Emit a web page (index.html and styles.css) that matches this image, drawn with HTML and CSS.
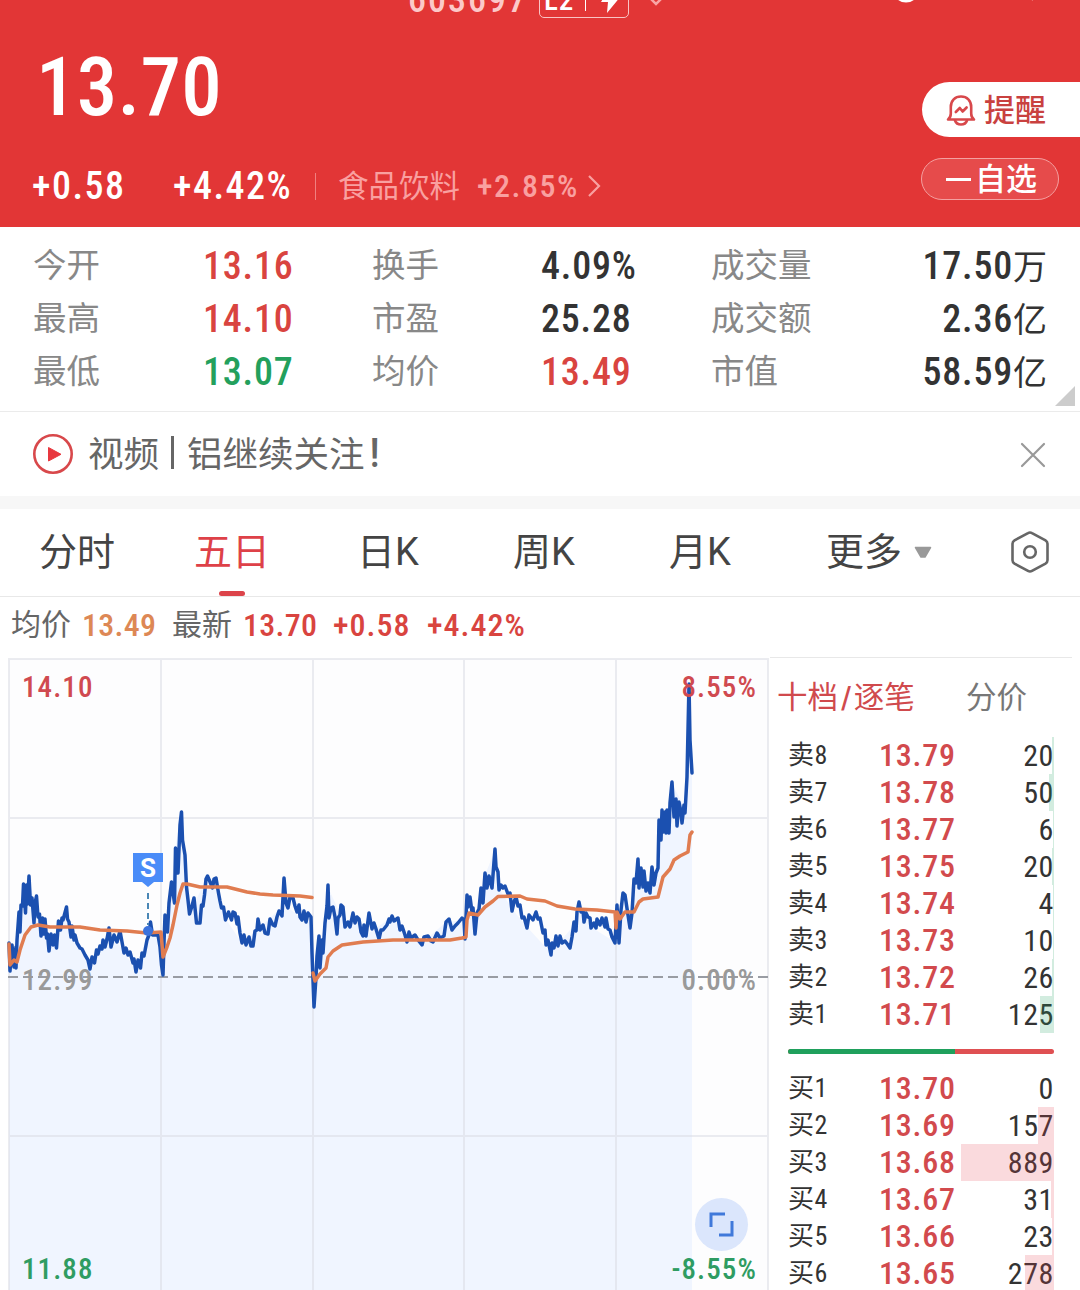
FILE: index.html
```html
<!DOCTYPE html>
<html lang="zh-CN">
<head>
<meta charset="UTF-8" />
<meta name="viewport" content="width=device-width, initial-scale=1" />
<title>603697 五日行情</title>
<link rel="stylesheet" href="styles.css">
</head>
<body>

<header class="quote">
  <div class="title-bar">
    <span class="code">603697</span>
    <span class="level">
      <span>L2</span><i></i>
      <svg width="20" height="26" viewBox="0 0 20 26"><path d="M9 0 0 15h7L6 26 20 9h-7l2-9z" fill="#fff"/></svg>
    </span>
    <svg class="title-arrow" width="16" height="10" viewBox="0 0 16 10"><path d="M2 2l6 6 6-6" fill="none" stroke="#f8a5a5" stroke-width="2.5"/></svg>
    <svg class="search" width="150" height="20" viewBox="0 0 150 20"><circle cx="13" cy="4" r="12" fill="none" stroke="#fff" stroke-width="3"/><path d="M134 8l6 7" stroke="#f8a5a5" stroke-width="2"/></svg>
  </div>
  <div class="price-row">
    <div class="price">13.70</div>
    <button class="remind">
      <svg width="30" height="32" viewBox="0 0 30 32" fill="none" stroke="#d8484b" stroke-width="2.6" stroke-linecap="round" stroke-linejoin="round">
        <path d="M2 25.500c2-1.500 2.800-3 2.800-6v-6.500C4.800 6.500 9 2.500 15 2.500s10.200 4 10.200 10.500v6.500c0 3 .8 4.500 2.800 6z"/>
        <path d="M9 26.500c1 3 3.200 4 6 4s5-1 6-4M9.800 18l4-4 2.800 3.500 4-4"/>
      </svg>
      <span>提醒</span>
    </button>
  </div>
  <div class="change-row">
    <span class="change">+0.58</span>
    <span class="percent">+4.42%</span>
    <span class="sector">食品饮料</span>
    <span class="sector-rate">+2.85%</span>
    <svg width="14" height="22" viewBox="0 0 14 22"><path d="M2 1l10 10-10 10" fill="none" stroke="#f9a0a0" stroke-width="2.2"/></svg>
    <button class="favor"><i></i><span>自选</span></button>
  </div>
</header>

<section class="stats">
  <span>今开</span><b class="up">13.16</b>
  <span>换手</span><b>4.09%</b>
  <span>成交量</span><b class="right">17.50<em>万</em></b>
  <span>最高</span><b class="up">14.10</b>
  <span>市盈</span><b>25.28</b>
  <span>成交额</span><b class="right">2.36<em>亿</em></b>
  <span>最低</span><b class="down">13.07</b>
  <span>均价</span><b class="up">13.49</b>
  <span>市值</span><b class="right">58.59<em>亿</em></b>
</section>

<div class="news">
  <svg width="42" height="42" viewBox="0 0 42 42">
    <circle cx="21" cy="21" r="18.700" fill="none" stroke="#d8484b" stroke-width="2.600"/>
    <path d="M16.500 14.500v13.500l12.500-6.700z" fill="#e8383f" stroke="#e8383f" stroke-linejoin="round"/>
  </svg>
  <span class="news-type">视频</span><i></i><span class="news-text">铝继续关注<em>!</em></span>
  <svg class="close" width="26" height="26" viewBox="0 0 26 26"><path d="M2 2l22 22M24 2L2 24" stroke="#999" stroke-width="2.200" stroke-linecap="round"/></svg>
</div>

<nav class="tabs">
  <a>分时</a>
  <a class="active">五日</a>
  <a>日K</a>
  <a>周K</a>
  <a>月K</a>
  <a class="more">更多<svg width="18" height="13" viewBox="0 0 18 13"><path d="M1.500 1.500h15l-5.500 9.500h-4z" fill="#999" stroke="#999" stroke-width="1.500" stroke-linejoin="round"/></svg></a>
  <svg class="setting" width="40" height="44" viewBox="0 0 40 44" fill="none" stroke="#666" stroke-width="2.600">
    <path d="M18 3.100q2-1.200 4 0L35.500 10.400q2 1.200 2 3.400v16.400q0 2.200-2 3.400L22 40.900q-2 1.200-4 0L4.500 33.600q-2-1.200-2-3.400V13.800q0-2.200 2-3.400z"/>
    <circle cx="20" cy="22" r="5.800"/>
  </svg>
</nav>

<div class="legend">
  <span>均价</span><b class="avg">13.49</b>
  <span class="latest">最新</span><b>13.70</b><b class="diff">+0.58</b><b class="rate">+4.42%</b>
</div>

<main class="main">
  <div class="chart">
    <svg width="770" height="633" viewBox="0 657 770 633">
      <rect x="9" y="658.500" width="759" height="640" fill="#fdfdfe"/>
      <!-- price area -->
      <path class="area" d="M9 1290L9 943 16 950 24 886 29 878 41 930 49 948 66 910 72 937 90 967 109 930 136 970 150 925 158 935 163 974 175 850 181 813 190 912 207 878 217 880 225 918 242 943 257 930 284 905 302 918 311 917 314 1005 328 887 345 925 353 915 366 935 392 917 405 935 422 943 446 922 464 920 467 897 475 930 485 875 495 850 500 890 513 910 527 927 551 953 574 925 579 904 591 927 615 942 623 894 630 927 638 860 650 892 658 868 662 812 669 830 672 784 684 806 689 686 692 773V1290z"/>
      <g class="grid">
        <path d="M8 659H769M9 659V1290M161 659V1290M313 659V1290M464 659V1290M616 659V1290M768 659V1290M9 818H768M9 1136H768"/>
      </g>
      <path d="M8 977H768" stroke="#999ca3" stroke-width="2" stroke-dasharray="10 5"/>
      <polyline class="price-line" points="9,943 10,971 12,945 14,967 16,947 16,968 17,940 19,912 20,932 21,905 22.500,906 23.500,884 25.500,913 26.500,885 27.500,904 29,876 30.500,905 32,898 34,923 35,903 36.500,896 38,917 39.500,914 41,936 42.500,918 44,934 45,919 46.500,938 47.500,934 49,951 51,934 53,945 54.500,935 56.500,948 58.500,921 60.500,930 62,918 63,920 66.500,907 67.500,919 69,922 71,937 72,926 74,940 75,935 77,943 80,948 82,949 85,955 88,960 90,969 92,957 94.500,963 96.500,950 98,954 100,946 102,949 103,940 105,947 107,939 109,928 111,947 114,935 117,942 120,931 122,942 124,953 126,948 128,955 130,952 133,963 134,959 136,972 138,960 140.500,968 142,953 144,956 147,940 149,935 150.500,922 152.500,935 158,935 160,947 161.500,965 163,975 164,943 165,915 167.500,932 169,903 171.500,882 174.500,903 175.500,848 178,873 180,825 181.500,812 182.500,840 185,855 186.500,887 188,900 189.500,914 192,906 194,898 196.500,923 200,923 201.500,905 203,906 204.500,895 206,879 207.500,876 210.500,883 212.500,888 214,879 216,878 218.500,893 220,901 221.500,908 223.500,907 225.500,920 228.500,912 231.500,920 233,912 235,913 237,924 238,917 240,933 242,943 244,935 246,945 249,937 251,946 253,946 255,931 257,930 258,919 260,930 263,925 265,933 268,934 270,919 273,925 275,926 277,917 279,911 281,914 282,916 284,878 286,903 288,908 290,897 293,898 295,906 297,912 299,905 300,917 302,920 304,911 306,922 308,913 311,917 312,953 314,1007 316,977 317,956 319,936 320,968 322,940 323,953 325,923 327,906 328,885 329,918 331,908 333,907 335,917 337,934 338,918 340,915 341,905 343,907 345,927 348,922 350,927 353,913 355,923 357,917 359,919 361,932 363,936 364,925 366,936 369,913 372,929 374,923 376,929 379,939 381,930 383,930 387,925 389,919 390,922 392,916 394,921 398,918 400,930 402,926 405,935 407,942 409,932 411,938 415,935 418,940 422,945 424,937 428,936 431,941 433,942 437,933 440,938 444,936 446,922 449,919 452,930 455,926 458,923 462,918 464,920 465,939 467,895 468,907 470,897 472,912 473,908 475,934 477,913 479,909 481,888 483,903 485,873 487,888 489,876 492,888 495,849 496,867 498,872 499,890 501,885 503,888 505,886 508,894 510,893 512,911 514,902 516,897 518,906 520,905 522,918 524,917 527,928 529,915 533,920 536,912 538,919 540,918 543,933 545,930 546,945 548,940 551,955 552,943 554,948 556,936 558,946 560,936 562,943 565,941 568,945 570,948 572,937 574,922 576,931 577,912 579,902 581,912 583,910 584,922 586,913 588,917 590,918 591,928 594,923 596,928 597,919 600,925 602,918 605,927 606,918 608,929 610,930 612,937 615,943 617,905 619,943 621,910 623,893 625,895 628,915 630,928 632,913 634,879 636,883 638,859 639,888 641,868 643,887 644,871 646,891 648,883 650,893 652,867 654,885 656,873 658,868 659,820 661,840 662,810 663,832 665,812 666,833 667,810 669,833 670,803 672,782 674,817 676,799 677,826 679,802 681,812 682,823 684,805 685,813 687,777 689,684 690,740 692,773"/>
      <path class="avg-line" d="M9 944L10 965 14 960 17 962 20 950 25 935 31 927 38 925 50 927 80 927 100 930 127 931 147 933 161 932 163 957 167 947 170 938 173 925 177 905 180 893 183 884 187 884 200 887 227 887 247 892 260 894 273 895 300 896 312 897.500M313 973L315 981 320 974 326 968 328 957 333 951 342 945 363 942 393 940 450 940 462 938 466 937 467 920 469 913 478 915 485 907 493 901 498 896.500 520 896 527 899 545 901 557 906 575 909 597 910 615 912 616 928 617 912 620 919 625 912 634 912 639 902 643 899 658 897 663 877 670 869 674 860 680 856 688 852 690 835 692 832"/>
      <!-- sell mark -->
      <path d="M148 893V925" stroke="#4a87b5" stroke-width="2" stroke-dasharray="6 4"/>
      <circle cx="148" cy="931" r="5" fill="#3b72dc"/>
      <path d="M133 853h30v29h-9l-6 5-6-5h-9z" fill="#4a8cf8"/>
      <text class="mark" x="148" y="877" text-anchor="middle">S</text>
      <!-- axis labels -->
      <text class="axis up" x="22" y="697">14.10</text>
      <text class="axis up" x="757" y="697" text-anchor="end">8.55%</text>
      <text class="axis mid" x="22" y="990">12.99</text>
      <text class="axis mid" x="757" y="990" text-anchor="end">0.00%</text>
      <text class="axis down" x="22" y="1279">11.88</text>
      <text class="axis down" x="757" y="1279" text-anchor="end">-8.55%</text>
      <circle cx="721.500" cy="1224.500" r="26.500" fill="#dbe6fc"/>
      <path d="M725 1214H711V1227M719 1235H732V1221" fill="none" stroke="#4079da" stroke-width="3"/>
    </svg>
  </div>

  <aside class="book">
    <div class="book-tabs"><span class="active">十档<em>/</em>逐笔</span><span>分价</span></div>
    <div class="sell">
      <div class="row"><span>卖8</span><b>13.79</b><em>20</em><i style="width:2px"></i></div>
      <div class="row"><span>卖7</span><b>13.78</b><em>50</em><i style="width:5px"></i></div>
      <div class="row"><span>卖6</span><b>13.77</b><em>6</em><i style="width:1px"></i></div>
      <div class="row"><span>卖5</span><b>13.75</b><em>20</em><i style="width:2px"></i></div>
      <div class="row"><span>卖4</span><b>13.74</b><em>4</em><i style="width:1px"></i></div>
      <div class="row"><span>卖3</span><b>13.73</b><em>10</em><i style="width:1px"></i></div>
      <div class="row"><span>卖2</span><b>13.72</b><em>26</em><i style="width:2px"></i></div>
      <div class="row"><span>卖1</span><b>13.71</b><em>125</em><i style="width:14px"></i></div>
    </div>
    <div class="ratio"><i style="width:167px"></i></div>
    <div class="buy">
      <div class="row"><span>买1</span><b>13.70</b><em>0</em></div>
      <div class="row"><span>买2</span><b>13.69</b><em>157</em><i style="width:16px"></i></div>
      <div class="row"><span>买3</span><b>13.68</b><em>889</em><i style="width:93px"></i></div>
      <div class="row"><span>买4</span><b>13.67</b><em>31</em><i style="width:3px"></i></div>
      <div class="row"><span>买5</span><b>13.66</b><em>23</em><i style="width:2px"></i></div>
      <div class="row"><span>买6</span><b>13.65</b><em>278</em><i style="width:29px"></i></div>
    </div>
  </aside>
</main>

</body>
</html>
```
FILE: styles.css
```css
* {
  box-sizing: border-box;
}
body {
  margin: 0;
  width: 1080px;
  height: 1290px;
  overflow: hidden;
  background: #fff;
  color: #333;
  font-family: "Roboto Condensed", Roboto, "Noto Sans CJK SC", sans-serif;
  white-space: nowrap;
}
svg {
  display: block;
  flex: none;
}
b, em, i {
  font-style: normal;
  font-weight: 500;
}
button {
  border: none;
  font-family: inherit;
  padding: 0;
}
.up { color: #d9443f; fill: #d04a50; }
.down { color: #23a05c; fill: #2f9c62; }

/* header */
.quote {
  height: 227px;
  background: #e23636;
  color: #fff;
  overflow: hidden;
}
.title-bar {
  display: flex;
  height: 40px;
  margin-top: -20px;
  padding-left: 408px;
}
.code {
  width: 131px;
  font-size: 36px;
  font-weight: 500;
  line-height: 41px;
  letter-spacing: 2px;
  color: #fcc9c9;
}
.level {
  display: flex;
  align-items: center;
  width: 90px;
  height: 38px;
  padding: 2px 0 0 4px;
  border: 1.500px solid #f9c4c4;
  border-radius: 5px;
  font-size: 29px;
  font-weight: 500;
  letter-spacing: 1px;
}
.level i {
  width: 1px;
  height: 22px;
  margin: 0 15px 0 11px;
  background: #fff;
}
.title-arrow {
  margin: 16px 0 0 19px;
}
.search {
  margin: 4.500px 0 0 229px;
}
.price-row {
  display: flex;
  justify-content: space-between;
  height: 130px;
  padding-left: 36px;
}
.price {
  font-size: 81px;
  font-weight: 500;
  line-height: 136px;
  letter-spacing: .3px;
}
.remind {
  display: flex;
  align-items: center;
  width: 158px;
  height: 55px;
  margin-top: 62px;
  padding-left: 24px;
  border-radius: 28px 0 0 28px;
  background: #fff;
  color: #c9413f;
  font-size: 31px;
  font-weight: 500;
}
.remind span {
  margin-left: 8px;
  padding-bottom: 5px;
}
.change-row {
  display: flex;
  align-items: center;
  height: 72px;
  padding-left: 32px;
  font-size: 38px;
  font-weight: 500;
  letter-spacing: 1.500px;
}
.change {
  width: 141px;
}
.percent {
  width: 142px;
}
.sector {
  width: 162px;
  padding-left: 22px;
  font-size: 30.500px;
  font-weight: 400;
  line-height: 27px;
  letter-spacing: 0;
  border-left: 1px solid #f08080;
  color: #f9a0a0;
}
.sector-rate {
  width: 110px;
  font-size: 32px;
  color: #f9a0a0;
}
.favor {
  display: flex;
  align-items: center;
  width: 138px;
  height: 42px;
  margin: -14px 0 0 320px;
  padding-left: 24px;
  border: 1px solid #f4a0a0;
  border-radius: 21px;
  background: #e64b4b;
  color: #fff;
  font-size: 31px;
  font-weight: 500;
}
.favor span {
  padding-bottom: 5px;
}
.favor i {
  width: 25px;
  height: 3px;
  margin-right: 4px;
  background: #fff;
}

/* stats */
.stats {
  position: relative;
  display: grid;
  grid-template-columns: 170px 169px 169px 170px 169px 167px;
  grid-auto-rows: 53px;
  height: 185px;
  padding: 12px 33px 0;
  border-bottom: 1px solid #ebebeb;
  line-height: 54px;
}
.stats span {
  font-size: 33.500px;
  line-height: 53px;
  color: #888;
}
.stats b {
  font-size: 38px;
  letter-spacing: .8px;
}
.stats em {
  font-size: 34px;
  font-weight: 400;
  letter-spacing: 0;
}
.stats .right {
  text-align: right;
}
.stats::after {
  content: "";
  position: absolute;
  right: 5px;
  bottom: 5px;
  border-left: 20px solid transparent;
  border-bottom: 20px solid #ccc;
}

/* news */
.news {
  display: flex;
  align-items: center;
  height: 84px;
  padding-left: 32px;
  font-size: 35.500px;
  color: #666;
}
.news span {
  padding-bottom: 5px;
}
.news-type {
  margin-left: 14px;
}
.news-text em {
  margin-left: 5px;
  font-size: 40px;
}
.news i {
  width: 3px;
  height: 33px;
  margin: -3px 13px 0 12px;
  background: #666;
}
.close {
  margin: 1px 34px 0 auto;
}

/* tabs */
.tabs {
  display: flex;
  height: 101px;
  border-top: 13px solid #f7f7f7;
  border-bottom: 1px solid #e8e8e8;
  font-family: Roboto, "Noto Sans CJK SC", sans-serif;
  font-size: 38px;
  line-height: 87px;
  color: #444;
}
.tabs a {
  position: relative;
  width: 156px;
  text-align: center;
}
.tabs a:first-child {
  width: 154px;
}
.tabs .active {
  color: #de4148;
}
.tabs .active::after {
  content: "";
  position: absolute;
  left: 65px;
  bottom: 0;
  width: 26px;
  height: 5px;
  border-radius: 3px;
  background: #dc444a;
}
.tabs .more {
  display: flex;
  align-items: center;
  width: 232px;
  padding-left: 48px;
}
.more svg {
  margin-left: 12px;
}
.setting {
  margin-top: 21px;
}

/* legend */
.legend {
  display: flex;
  height: 60px;
  padding-left: 11px;
  font-size: 30px;
  line-height: 56px;
  color: #666;
}
.legend b {
  width: 90px;
  font-size: 32px;
  letter-spacing: .3px;
  color: #d9443f;
}
.legend span {
  width: 71px;
}
.legend .avg {
  color: #dd8855;
}
.legend .diff, .legend .rate {
  letter-spacing: 1px;
}
.legend .rate {
  margin-left: 4px;
}

/* chart */
.main {
  display: flex;
}
.chart {
  width: 770px;
}
.area {
  fill: #f0f5ff;
}
.grid {
  fill: none;
  stroke: #d8dae2;
  stroke-opacity: .5;
  stroke-width: 2;
}
.price-line, .avg-line {
  fill: none;
  stroke: #1b50b0;
  stroke-width: 3.500;
  stroke-linejoin: round;
  stroke-linecap: round;
}
.avg-line {
  stroke: #e07c50;
}
.mark {
  font-family: Roboto, sans-serif;
  font-size: 26px;
  font-weight: 700;
  fill: #fff;
}
.axis {
  font-size: 29px;
  font-weight: 500;
  letter-spacing: 1.100px;
}
.mid {
  fill: #999;
}

/* order book */
.book {
  width: 302px;
  border-top: 1px solid #e8e8e8;
}
.book-tabs {
  display: flex;
  height: 79px;
  padding-left: 7px;
  font-size: 30.500px;
  line-height: 79px;
  color: #777;
}
.book-tabs span:first-child {
  width: 189px;
}
.book-tabs em {
  margin: 0 2px 0 3px;
}
.book-tabs .active {
  color: #d04a4d;
}
.row {
  position: relative;
  display: flex;
  width: 266px;
  height: 37px;
  margin-left: 18px;
  line-height: 37px;
}
.row span {
  width: 91px;
  font-size: 26px;
  letter-spacing: .5px;
}
.row b {
  font-size: 32px;
  letter-spacing: .8px;
  color: #d24a4d;
}
.row em {
  margin-left: auto;
  font-size: 30px;
  font-weight: 400;
  letter-spacing: .6px;
}
.row i {
  position: absolute;
  right: 0;
  top: 0;
  height: 37px;
  background: rgba(30, 160, 96, .2);
}
.buy .row i {
  background: rgba(230, 60, 75, .19);
}
.ratio {
  width: 266px;
  height: 5px;
  margin: 16px 0 16px 18px;
  border-radius: 3px;
  background: #df5052;
  overflow: hidden;
}
.ratio i {
  display: block;
  height: 5px;
  background: #1fa05c;
}
```
